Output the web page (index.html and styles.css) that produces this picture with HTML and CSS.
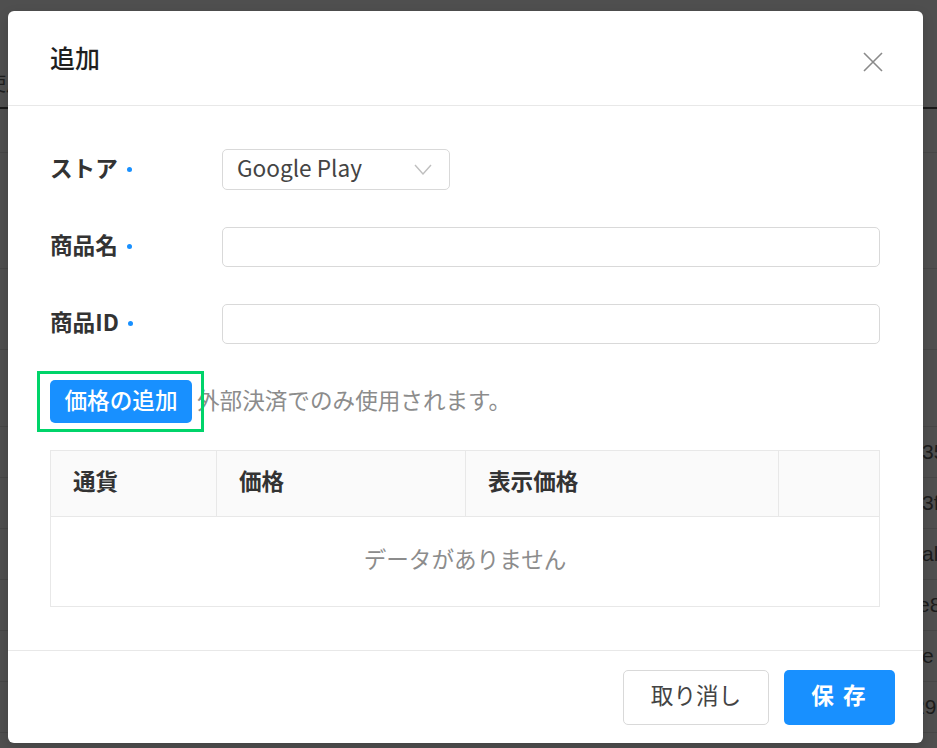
FILE: index.html
```html
<!DOCTYPE html>
<html lang="ja">
<head>
<meta charset="utf-8">
<link rel="stylesheet" href="styles.css">
</head>
<body>
<div class="page">
  <div class="page-head"><span class="page-head-text">使用</span></div>
  <div class="page-filter"></div>
  <div class="page-filter2"></div>
  <div class="page-row tall"></div>
  <div class="page-row mid"></div>
  <div class="page-row"><span class="cell">35</span></div>
  <div class="page-row"><span class="cell">3f</span></div>
  <div class="page-row"><span class="cell">al</span></div>
  <div class="page-row"><span class="cell cut">e8</span></div>
  <div class="page-row"><span class="cell">e</span></div>
  <div class="page-row"><span class="cell cut2">29</span></div>
</div>

<div class="modal">
  <div class="modal-header">
    <div class="modal-title">追加</div>
    <svg class="close" width="20" height="20" viewBox="0 0 20 20"><path d="M1 1 L19 19 M19 1 L1 19" stroke="#8a8a8a" stroke-width="1.6" fill="none"/></svg>
  </div>
  <div class="modal-body">
    <div class="form-row">
      <div class="label">ストア<span class="req"></span></div>
      <div class="select">
        <span class="select-text">Google Play</span>
        <svg width="18" height="11" viewBox="0 0 18 11"><path d="M1 1 L9 10 L17 1" stroke="#bfbfbf" stroke-width="1.4" fill="none"/></svg>
      </div>
    </div>
    <div class="form-row">
      <div class="label">商品名<span class="req"></span></div>
      <div class="input"></div>
    </div>
    <div class="form-row">
      <div class="label">商品ID<span class="req"></span></div>
      <div class="input"></div>
    </div>
    <div class="price-row">
      <button class="btn-add">価格の追加</button>
      <span class="hint">外部決済でのみ使用されます。</span>
    </div>
    <div class="table">
      <div class="thead">
        <div class="th c1"><span class="tt">通貨</span></div>
        <div class="th c2"><span class="tt">価格</span></div>
        <div class="th c3"><span class="tt">表示価格</span></div>
        <div class="th c4"></div>
      </div>
      <div class="empty"><span class="tt">データがありません</span></div>
    </div>
  </div>
  <div class="modal-footer">
    <button class="btn-cancel">取り消し</button>
    <button class="btn-save">保 存</button>
  </div>
</div>
<div class="highlight"></div>
</body>
</html>
```

FILE: styles.css
```css
html, body {
  margin: 0;
  padding: 0;
}
body {
  width: 937px;
  height: 748px;
  overflow: hidden;
  background: #4f4f4f;
  font-family: "Noto Sans CJK JP", "Noto Sans", sans-serif;
  position: relative;
}
.page {
  display: flex;
  flex-direction: column;
}
.page-head {
  height: 107px;
  border-bottom: 2px solid #1a1a1a;
  position: relative;
}
.page-head-text {
  position: absolute;
  left: -14px;
  top: 68px;
  font-size: 20px;
  color: #1e1e1e;
}
.page-filter {
  height: 43px;
  border-bottom: 1px solid #474747;
}
.page-filter2 {
  height: 115px;
  border-bottom: 1px solid #474747;
}
.page-row {
  height: 50px;
  border-bottom: 1px solid #474747;
  display: flex;
  align-items: center;
  font-family: "Liberation Sans", sans-serif;
  font-size: 21px;
  color: #1c1c1c;
}
.page-row.tall {
  height: 80px;
}
.page-row.mid {
  height: 76px;
}
.cell {
  margin-left: 922px;
  white-space: nowrap;
}
.cell.cut {
  margin-left: 918px;
}
.cell.cut2 {
  margin-left: 913px;
}

.modal {
  position: absolute;
  left: 8px;
  top: 11px;
  width: 915px;
  height: 732px;
  background: #fff;
  border-radius: 6px;
  display: flex;
  flex-direction: column;
  box-shadow: 0 4px 12px rgba(0,0,0,0.15);
}
.modal-header {
  height: 94px;
  flex: none;
  border-bottom: 1px solid #e8e8e8;
  padding: 0 40px 0 42px;
  display: flex;
  align-items: center;
  justify-content: space-between;
}
.modal-title {
  font-size: 25px;
  color: #1f1f1f;
  font-weight: 500;
  line-height: 1;
  margin-top: -1px;
}
.close {
  margin-top: 7px;
}
.modal-body {
  flex: 1;
  padding: 43px 43px 0 42px;
}
.form-row {
  display: flex;
  align-items: center;
  height: 41px;
  margin-bottom: 36px;
}
.label {
  width: 172px;
  flex: none;
  display: flex;
  align-items: center;
  font-size: 22.6px;
  font-weight: 700;
  color: #333;
  padding-bottom: 5px;
}
.req {
  width: 5px;
  height: 5px;
  border-radius: 50%;
  background: #1890ff;
  margin-left: 9px;
  margin-top: 5px;
}
.select {
  display: flex;
  align-items: center;
  justify-content: space-between;
  padding: 0 17px 0 14px;
  box-sizing: border-box;
  width: 228px;
  height: 41px;
  border: 1px solid #d9d9d9;
  border-radius: 5px;
  font-size: 22.6px;
  color: #444;
}
.select-text {
  margin-bottom: 5px;
}
.input {
  flex: 1;
  height: 40px;
  border: 1px solid #d9d9d9;
  border-radius: 5px;
  box-sizing: border-box;
}
.price-row {
  display: flex;
  align-items: center;
  height: 43px;
}
.btn-add {
  width: 142px;
  height: 43px;
  border: none;
  border-radius: 5px;
  background: #1890ff;
  color: #fff;
  font-family: inherit;
  font-size: 22.6px;
  font-weight: 500;
  padding: 0 0 5px;
}
.hint {
  margin-left: 5px;
  margin-bottom: 5px;
  font-size: 22.6px;
  color: #8c8c8c;
}
.table {
  margin-top: 27px;
  border: 1px solid #e8e8e8;
}
.thead {
  display: flex;
  height: 65px;
  background: #fafafa;
  border-bottom: 1px solid #e8e8e8;
}
.th {
  display: flex;
  align-items: center;
  padding-left: 22px;
  box-sizing: border-box;
  font-size: 22.6px;
  font-weight: 700;
  color: #333;
  border-right: 1px solid #e8e8e8;
}
.tt {
  margin-bottom: 6px;
}
.c1 { width: 166px; }
.c2 { width: 249px; }
.c3 { width: 313px; }
.c4 { flex: 1; border-right: none; }
.empty {
  height: 89px;
  display: flex;
  align-items: center;
  justify-content: center;
  font-size: 22.6px;
  color: #8c8c8c;
}
.modal-footer {
  flex: none;
  border-top: 1px solid #e8e8e8;
  display: flex;
  justify-content: flex-end;
  align-items: flex-start;
  padding: 19px 28px 0 0;
  gap: 15px;
  box-sizing: border-box;
  height: 93px;
}
.btn-cancel {
  width: 146px;
  height: 55px;
  background: #fff;
  border: 1px solid #d9d9d9;
  border-radius: 5px;
  font-family: inherit;
  font-size: 22.6px;
  color: #444;
  padding: 0 0 6px;
}
.btn-save {
  width: 111px;
  height: 55px;
  background: #1890ff;
  border: none;
  border-radius: 5px;
  font-family: inherit;
  font-size: 22.6px;
  font-weight: 700;
  color: #fff;
  padding: 0 0 6px;
  letter-spacing: 2px;
}
.highlight {
  position: absolute;
  left: 37px;
  top: 371px;
  width: 167px;
  height: 61px;
  box-sizing: border-box;
  border: 3px solid #00d46a;
}
```
